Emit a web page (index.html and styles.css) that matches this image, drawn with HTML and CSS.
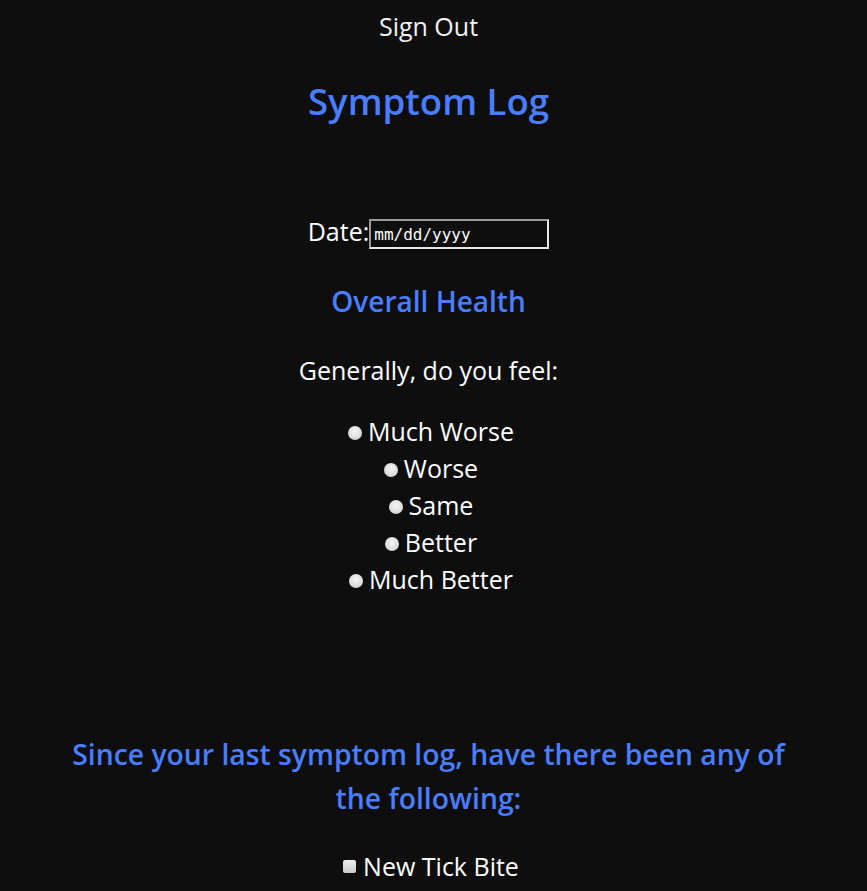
FILE: index.html
```html
<!DOCTYPE html>
<html>
<head>
<meta charset="utf-8">
<link rel="stylesheet" href="styles.css">
</head>
<body>
<div class="page">
  <div class="signout">Sign Out</div>
  <h1 class="title">Symptom Log</h1>
  <form class="form">
    <div class="date-row">
      <label class="date-label">Date:</label><span class="date-input">mm/dd/yyyy</span>
    </div>
    <h2 class="section">Overall Health</h2>
    <p class="question">Generally, do you feel:</p>
    <div class="options">
      <label class="opt"><span class="radio"></span>Much Worse</label>
      <label class="opt"><span class="radio"></span>Worse</label>
      <label class="opt"><span class="radio"></span>Same</label>
      <label class="opt"><span class="radio"></span>Better</label>
      <label class="opt"><span class="radio"></span>Much Better</label>
    </div>
    <h2 class="section since">Since your last symptom log, have there been any of the following:</h2>
    <div class="checks">
      <label class="opt"><span class="check"></span>New Tick Bite</label>
    </div>
  </form>
</div>
</body>
</html>
```

FILE: styles.css
```css
html, body {
  margin: 0;
  padding: 0;
  background: #0e0e0e;
}
body {
  font-family: "Open Sans", sans-serif;
  color: #ffffff;
}
.page {
  text-align: center;
  padding: 9px 70px 0 60px;
}
.signout {
  font-size: 25px;
  line-height: 34px;
  color: #f2f2f2;
}
.title {
  margin: 33px 0 0;
  font-size: 36.6px;
  line-height: 50px;
  font-weight: 600;
  color: #4a7dff;
}
.date-row {
  margin-top: 88px;
  display: flex;
  justify-content: center;
  align-items: flex-end;
  font-size: 25px;
  line-height: 34px;
}
.date-label {
  color: #fff;
}
.date-input {
  display: inline-block;
  box-sizing: border-box;
  width: 180px;
  height: 30px;
  margin-bottom: -1px;
  border: 2px solid;
  border-color: #9a9a9a #e6e6e6 #e6e6e6 #9a9a9a;
  background: #0e0e0e;
  font-family: "DejaVu Sans Mono", monospace;
  font-size: 16px;
  line-height: 28px;
  text-align: left;
  padding-left: 3px;
  color: #fff;
}
.section {
  margin: 33px 0 0;
  font-size: 28px;
  line-height: 40px;
  font-weight: 600;
  color: #4a7dff;
}
.question {
  margin: 32px 0 0;
  font-size: 25px;
  line-height: 34px;
}
.options {
  margin-top: 26px;
  display: flex;
  flex-direction: column;
  align-items: center;
}
.opt {
  display: flex;
  align-items: center;
  font-size: 25px;
  line-height: 37px;
}
.radio {
  width: 14px;
  height: 14px;
  border-radius: 50%;
  background: radial-gradient(circle at 50% 40%, #f5f5f5 0%, #dcdcdc 60%, #bdbdbd 100%);
  margin-left: 5px;
  margin-right: 6px;
  margin-top: 2px;
}
.since {
  margin-top: 134px;
  font-size: 28.3px;
  line-height: 44px;
}
.checks {
  margin-top: 28px;
  display: flex;
  flex-direction: column;
  align-items: center;
}
.check {
  width: 13px;
  height: 13px;
  border-radius: 2px;
  background: linear-gradient(#f0f0f0, #c8c8c8);
  margin-left: 5px;
  margin-right: 7px;
}
```
